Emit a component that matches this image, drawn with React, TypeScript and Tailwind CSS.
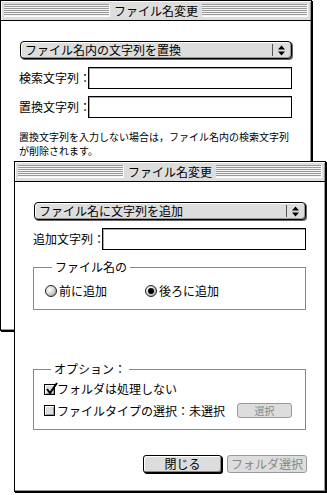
import React from 'react';

function Stripes() {
  return (
    <div className="flex-1 h-[13px] bg-[image:repeating-linear-gradient(to_bottom,#999_0px,#999_1px,#f4f4f4_1px,#f4f4f4_2px)] border-r border-b border-[#fff]" />
  );
}

function TitleBar({ title }: { title: string }) {
  return (
    <div className="h-[20px] shrink-0 bg-[#dddddd] border-b border-black flex items-center px-[3px] shadow-[inset_1px_1px_0_#fff,inset_-1px_0_0_#999]">
      <Stripes />
      <span className="px-[4px] text-[12px] leading-none text-black">{title}</span>
      <Stripes />
    </div>
  );
}

function Window({ pos, children }: { pos: string; children: React.ReactNode }) {
  return (
    <div className={`absolute ${pos} w-[312px] h-[331px] bg-white border border-black shadow-[1px_1px_0_#000] flex flex-col`}>
      <TitleBar title="ファイル名変更" />
      <div className="flex-1 flex flex-col pl-[19px] pt-[20px] border-r border-b border-[#999] overflow-hidden">
        {children}
      </div>
    </div>
  );
}

function Popup({ label }: { label: string }) {
  return (
    <div className="w-[272px] h-[18px] shrink-0 rounded-[4px] border border-black bg-[#dddddd] flex items-stretch shadow-[inset_1px_1px_0_#fff,inset_-1px_-1px_0_#999,1px_1px_0_#666]">
      <span className="flex-1 pl-[4px] text-[12px] leading-[16px] text-black whitespace-nowrap">{label}</span>
      <div className="w-[17px] my-[2px] mr-[2px] border-l border-[#555] flex items-center justify-center">
        <svg width="7" height="11" viewBox="0 0 7 11">
          <path d="M3.5 0.5 L7 4.5 L0 4.5 Z" fill="#000" />
          <path d="M0 6.5 L7 6.5 L3.5 10.5 Z" fill="#000" />
        </svg>
      </div>
    </div>
  );
}

function Field({ label, className }: { label: string; className: string }) {
  return (
    <div className={`flex items-center w-[273px] h-[22px] ${className}`}>
      <span className="w-[69px] shrink-0 text-[12px] leading-none text-black whitespace-nowrap">{label}</span>
      <div className="flex-1 h-full border border-black bg-white shadow-[inset_1px_1px_0_#aaa]" />
    </div>
  );
}

function Radio({ label, selected, className = '' }: { label: string; selected?: boolean; className?: string }) {
  return (
    <div className={`flex items-center gap-[2px] ${className}`}>
      <div className="w-[12px] h-[12px] rounded-full border border-[#222] bg-[radial-gradient(circle_at_35%_35%,#fff_0%,#ddd_40%,#888_100%)] flex items-center justify-center">
        {selected && <div className="w-[6px] h-[6px] rounded-full bg-black" />}
      </div>
      <span className="text-[12px] leading-none text-black">{label}</span>
    </div>
  );
}

function Checkbox({ checked }: { checked?: boolean }) {
  return (
    <div className="relative w-[11px] h-[11px] shrink-0 border border-black bg-[#dddddd] shadow-[inset_1px_1px_0_#fff,inset_-1px_-1px_0_#999]">
      {checked && (
        <svg className="absolute left-[0px] top-[-3px]" width="13" height="13" viewBox="0 0 13 13">
          <path d="M2 7 L5 11 L12 1" fill="none" stroke="#000" strokeWidth="2" />
        </svg>
      )}
    </div>
  );
}

export default function App() {
  return (
    <div className="relative w-[327px] h-[495px] bg-white overflow-hidden font-['Noto_Sans_CJK_JP','Noto_Sans',sans-serif]">
      {/* back window */}
      <Window pos="left-0 top-0">
        <Popup label="ファイル名内の文字列を置換" />
        <Field className="mt-[8px] -ml-[1px]" label="検索文字列：" />
        <Field className="mt-[7px] -ml-[1px]" label="置換文字列：" />
        <div className="mt-[11px] -ml-[1px] text-[10px] leading-[15px] text-black whitespace-nowrap">
          <div>置換文字列を入力しない場合は，ファイル名内の検索文字列</div>
          <div className="-mt-[1px]">が削除されます。</div>
        </div>
      </Window>

      {/* front window */}
      <Window pos="left-[14px] top-[161px]">
        <Popup label="ファイル名に文字列を追加" />
        <Field className="mt-[8px] -ml-[1px]" label="追加文字列：" />

        <fieldset className="mt-[10px] -ml-[1px] w-[273px] border border-[#888] pl-[11px] pt-[10px] pb-[12px]">
          <legend className="ml-[7px] px-[3px] text-[12px] leading-[14px] text-black">ファイル名の</legend>
          <div className="flex items-center h-[13px]">
            <Radio label="前に追加" className="w-[100px]" />
            <Radio label="後ろに追加" selected />
          </div>
        </fieldset>

        <fieldset className="mt-[52px] -ml-[1px] w-[273px] border border-[#888] pl-[10px] pr-[13px] pt-[6px] pb-[11px]">
          <legend className="ml-[7px] px-[3px] text-[12px] leading-[14px] text-black">オプション：</legend>
          <div className="flex items-center h-[14px] gap-[2px]">
            <Checkbox checked />
            <span className="text-[12px] leading-none text-black">フォルダは処理しない</span>
          </div>
          <div className="mt-[7px] flex items-center h-[15px] gap-[2px]">
            <Checkbox />
            <span className="text-[12px] leading-none text-black whitespace-nowrap">ファイルタイプの選択：未選択</span>
            <div className="ml-auto w-[55px] h-[15px] rounded-[3px] border border-[#999] bg-[#dddddd] flex items-center justify-center text-[10px] leading-none text-[#888]">
              選択
            </div>
          </div>
        </fieldset>

        <div className="mt-[25px] w-[273px] flex justify-end gap-[5px]">
          <div className="w-[79px] h-[18px] rounded-[3px] border border-black bg-[#dddddd] shadow-[inset_1px_1px_0_#fff,inset_-1px_-1px_0_#888,1px_1px_0_#000] flex items-center justify-center text-[12px] leading-none text-black">
            閉じる
          </div>
          <div className="w-[80px] h-[18px] rounded-[3px] border border-[#999] bg-[#dddddd] flex items-center justify-center text-[12px] leading-none text-[#888]">
            フォルダ選択
          </div>
        </div>
      </Window>
    </div>
  );
}
